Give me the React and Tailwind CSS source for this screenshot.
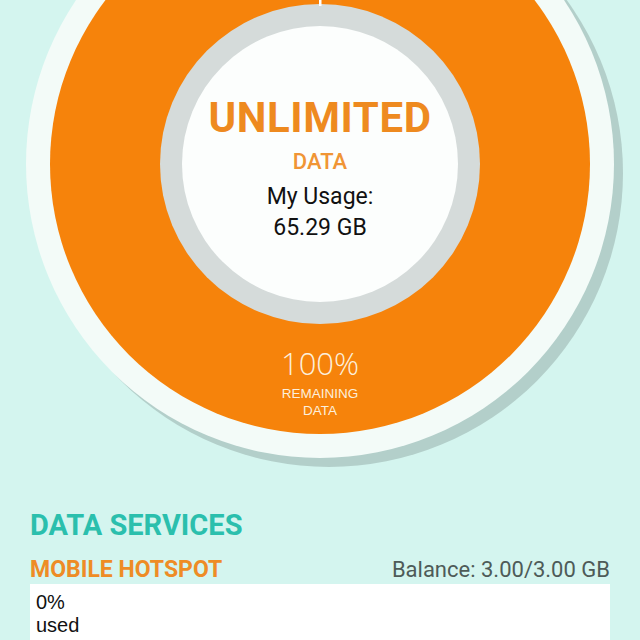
import React from "react";

const Donut = () => (
  <svg
    className="absolute inset-0"
    width="640"
    height="480"
    viewBox="0 0 640 480"
  >
    <circle cx="329" cy="173" r="294" fill="#b3cfca" />
    <circle cx="320" cy="164" r="294" fill="#f3fbf8" />
    <circle cx="320" cy="164" r="270" fill="#f6830b" />
    <circle cx="320" cy="164" r="160" fill="#d5dbda" />
    <circle cx="320" cy="164" r="138" fill="#fcfefd" />
    <rect x="319" y="0" width="2.5" height="6" fill="#ffffff" />
  </svg>
);

export default function App() {
  return (
    <div
      className="w-[640px] h-[640px] overflow-hidden bg-[#d4f5ef]"
      style={{ fontFamily: "Roboto, 'Liberation Sans', sans-serif" }}
    >
      <div className="relative h-[480px]">
        <Donut />
        <div className="relative flex flex-col items-center pt-[97px]">
          <div className="text-[42px] font-bold leading-none text-[#ee8a1f] tracking-[0.6px]">
            UNLIMITED
          </div>
          <div className="mt-[12px] text-[22px] font-medium leading-none text-[#f09535]">
            DATA
          </div>
          <div className="mt-[8px] text-[23px] leading-[31px] text-[#111111] text-center">
            <div>My Usage:</div>
            <div>65.29 GB</div>
          </div>
          <div className="mt-[105px] flex flex-col items-center text-[#fcefdc]">
            <div className="text-[31px] leading-none font-light font-['Open_Sans',sans-serif]">
              100%
            </div>
            <div className="mt-[6px] text-[13.5px] leading-[17px] text-center font-['Liberation_Sans',sans-serif]">
              <div>REMAINING</div>
              <div>DATA</div>
            </div>
          </div>
        </div>
      </div>

      <div className="px-[30px] pt-[31px]">
        <h2 className="text-[29px] font-bold leading-none text-[#2bbfad]">
          DATA SERVICES
        </h2>
        <div className="mt-[18px] flex items-baseline justify-between">
          <div className="text-[23px] font-bold leading-none text-[#ee8c25]">
            MOBILE HOTSPOT
          </div>
          <div className="text-[22px] leading-none text-[#4e5b58]">
            Balance: 3.00/3.00 GB
          </div>
        </div>
        <div className="mt-[3px] h-[80px] bg-white pl-[6px] pt-[7px] text-[20px] leading-[23px] text-[#111111] font-['Liberation_Sans',sans-serif]">
          <div>0%</div>
          <div>used</div>
        </div>
      </div>
    </div>
  );
}
